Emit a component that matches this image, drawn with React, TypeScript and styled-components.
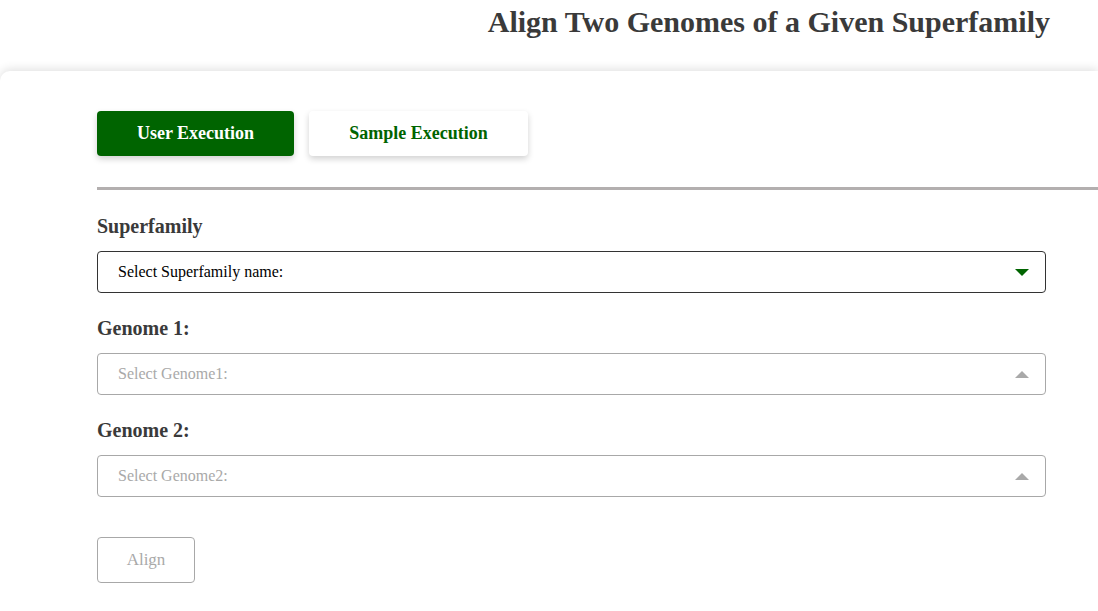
import React from "react";
import styled, { createGlobalStyle } from "styled-components";

const GlobalStyle = createGlobalStyle`
  html, body { margin: 0; padding: 0; background: #ffffff; }
  body { font-family: "Liberation Serif", "Times New Roman", serif; overflow: hidden; }
  * { box-sizing: border-box; }
`;

const Page = styled.div`
  width: 1098px;
  min-height: 611px;
  display: flex;
  flex-direction: column;
`;

const Header = styled.header`
  height: 71px;
  display: flex;
  justify-content: flex-end;
  padding: 5px 48px 0 0;
`;

const Title = styled.h1`
  margin: 0;
  font-size: 30px;
  line-height: 34px;
  font-weight: 700;
  color: #3a3a3a;
`;

const Card = styled.main`
  flex: 1;
  background: #fff;
  border-top-left-radius: 10px;
  box-shadow: 0 -2px 10px rgba(0, 0, 0, 0.12);
  padding: 40px 0 28px 97px;
  display: flex;
  flex-direction: column;
`;

const Tabs = styled.div`
  display: flex;
  gap: 15px;
`;

const Tab = styled.button<{ $active?: boolean }>`
  height: 45px;
  width: ${(p) => (p.$active ? "197px" : "219px")};
  border: none;
  border-radius: 4px;
  font-family: inherit;
  font-size: 18px;
  font-weight: 700;
  cursor: pointer;
  background: ${(p) => (p.$active ? "#006400" : "#ffffff")};
  color: ${(p) => (p.$active ? "#ffffff" : "#006400")};
  box-shadow: 0 3px 6px rgba(0, 0, 0, 0.18);
`;

const Divider = styled.hr`
  margin: 31px 0 0 0;
  border: none;
  height: 3px;
  background: #b3afaf;
`;

const Form = styled.div`
  display: flex;
  flex-direction: column;
  width: 949px;
  padding-top: 25px;
`;

const Field = styled.div`
  display: flex;
  flex-direction: column;
  gap: 13px;
  margin-bottom: 24px;
`;

const Label = styled.label`
  font-size: 20px;
  line-height: 23px;
  font-weight: 700;
  color: #3a3a3a;
`;

const SelectBox = styled.div<{ $enabled?: boolean }>`
  height: 42px;
  border: 1px solid ${(p) => (p.$enabled ? "#333333" : "#a8a8a8")};
  border-radius: 4px;
  display: flex;
  align-items: center;
  justify-content: space-between;
  padding: 0 16px 0 20px;
  font-size: 16px;
  color: ${(p) => (p.$enabled ? "#000000" : "#a9a9a9")};
`;

const Arrow = styled.span<{ $up?: boolean }>`
  width: 0;
  height: 0;
  border-left: 7px solid transparent;
  border-right: 7px solid transparent;
  ${(p) =>
    p.$up
      ? "border-bottom: 7px solid #a9a9a9;"
      : "border-top: 7px solid #006400;"}
`;

const AlignButton = styled.button`
  margin-top: 16px;
  width: 98px;
  height: 46px;
  background: #fff;
  border: 1px solid #a8a8a8;
  border-radius: 4px;
  font-family: inherit;
  font-size: 17px;
  color: #a9a9a9;
  align-self: flex-start;
`;

const Select: React.FC<{ text: string; enabled?: boolean }> = ({ text, enabled }) => (
  <SelectBox $enabled={enabled}>
    <span>{text}</span>
    <Arrow $up={!enabled} />
  </SelectBox>
);

export default function App() {
  return (
    <Page>
      <GlobalStyle />
      <Header>
        <Title>Align Two Genomes of a Given Superfamily</Title>
      </Header>
      <Card>
        <Tabs>
          <Tab $active>User Execution</Tab>
          <Tab>Sample Execution</Tab>
        </Tabs>
        <Divider />
        <Form>
          <Field>
            <Label>Superfamily</Label>
            <Select text="Select Superfamily name:" enabled />
          </Field>
          <Field>
            <Label>Genome 1:</Label>
            <Select text="Select Genome1:" />
          </Field>
          <Field>
            <Label>Genome 2:</Label>
            <Select text="Select Genome2:" />
          </Field>
          <AlignButton disabled>Align</AlignButton>
        </Form>
      </Card>
    </Page>
  );
}
